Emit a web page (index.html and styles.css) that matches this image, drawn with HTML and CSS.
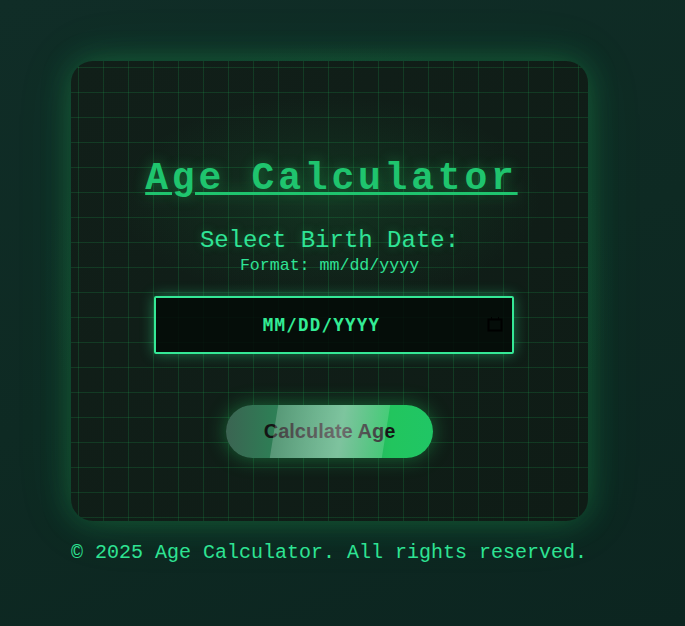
FILE: index.html
```html
<!DOCTYPE html>
<html lang="en">
<head>
<meta charset="utf-8">
<title>Age Calculator</title>
<link rel="stylesheet" href="styles.css">
</head>
<body>
<div class="wrap">
  <main class="card">
    <h1 class="title">Age Calculator</h1>
    <p class="label">Select Birth Date:</p>
    <p class="hint">Format: mm/dd/yyyy</p>
    <div class="date-field">
      <span class="date-text">MM/DD/YYYY</span>
      <svg class="cal" width="16" height="17" viewBox="0 0 16 17" aria-hidden="true">
        <rect x="1.5" y="3.5" width="13" height="11" fill="none" stroke="#000" stroke-width="2"/>
        <line x1="4.5" y1="1" x2="4.5" y2="3" stroke="#000" stroke-width="1"/>
        <line x1="11.5" y1="1" x2="11.5" y2="3" stroke="#000" stroke-width="1"/>
      </svg>
    </div>
    <button class="btn" type="button"><span class="btn-text">Calculate Age</span></button>
  </main>
  <footer class="foot">© 2025 Age Calculator. All rights reserved.</footer>
</div>
</body>
</html>
```
FILE: styles.css
```css
html, body {
  margin: 0;
  padding: 0;
}
body {
  min-height: 626px;
  background:
    radial-gradient(ellipse 60% 55% at 48% 45%, rgba(20, 90, 60, 0.35), transparent 70%),
    linear-gradient(160deg, #102d27 0%, #0e2a23 50%, #0c2520 100%);
  font-family: "Courier New", Courier, "Nimbus Mono PS", "Nimbus Mono L", FreeMono, "Liberation Mono", monospace;
}
.wrap {
  width: 517px;
  padding: 61px 0 0 71px;
}
.card {
  height: 460px;
  box-sizing: border-box;
  border-radius: 22px;
  padding-top: 97px;
  display: flex;
  flex-direction: column;
  align-items: center;
  background-color: #101e18;
  background-image:
    radial-gradient(ellipse 55% 30% at 50% 30%, rgba(34, 197, 94, 0.13), transparent 75%),
    linear-gradient(rgba(34, 197, 94, 0.17) 1px, transparent 1px),
    linear-gradient(90deg, rgba(34, 197, 94, 0.17) 1px, transparent 1px),
    linear-gradient(135deg, #111f19, #0f1c16);
  background-size: auto, 25px 25px, 25px 25px, auto;
  background-position: 0 0, 7px 6px, 7px 6px, 0 0;
  box-shadow: 0 0 30px rgba(34, 197, 94, 0.3), 0 0 60px rgba(34, 197, 94, 0.1);
}
.title {
  margin: 0;
  font-size: 38px;
  line-height: 41px;
  font-weight: bold;
  letter-spacing: 3.8px;
  color: #1fc46e;
  text-decoration: underline;
  text-decoration-thickness: 3px;
  text-underline-offset: 3px;
  text-shadow: 0 0 14px rgba(34, 197, 94, 0.45);
  padding-left: 3.8px;
}
.label {
  margin: 28px 0 0;
  font-size: 24px;
  line-height: 28px;
  color: #2fe395;
  text-shadow: 0 0 8px rgba(34, 197, 94, 0.35);
}
.hint {
  margin: 0;
  font-size: 16.6px;
  line-height: 22px;
  color: #2fe395;
}
.date-field {
  margin: 19px 0 0 9px;
  width: 360px;
  height: 58px;
  box-sizing: border-box;
  border: 2px solid #35e896;
  border-radius: 2px;
  background: rgba(3, 10, 7, 0.85);
  box-shadow: 0 0 14px rgba(46, 232, 143, 0.45);
  display: flex;
  align-items: center;
  padding: 0 9px 0 4px;
}
.date-text {
  flex: 1;
  text-align: center;
  font-family: "DejaVu Sans Mono", monospace;
  font-weight: bold;
  font-size: 17.5px;
  letter-spacing: 1.2px;
  color: #33ec95;
  padding-right: 4px;
}
.cal {
  display: block;
  margin-top: -2px;
}
.btn {
  margin-top: 51px;
  position: relative;
  overflow: hidden;
  width: 207px;
  height: 53px;
  border: 0;
  border-radius: 27px;
  background: linear-gradient(90deg, #3b6452 0%, #2e7d55 22%, #2f9e63 55%, #22c55e 80%, #20c665 100%);
  box-shadow: 0 0 20px rgba(34, 197, 94, 0.45);
  font-family: "Liberation Sans", Arial, sans-serif;
  font-weight: bold;
  font-size: 20px;
  color: #141414;
  padding: 0;
  cursor: pointer;
}
.btn-text {
  position: relative;
  z-index: 1;
}
.btn::after {
  content: "";
  position: absolute;
  top: 0;
  bottom: 0;
  left: 48px;
  width: 112px;
  transform: skewX(-9deg);
  background: linear-gradient(90deg, rgba(255, 255, 255, 0.2), rgba(255, 255, 255, 0.38) 60%, rgba(255, 255, 255, 0.16));
  z-index: 2;
}
.foot {
  margin-top: 21px;
  font-size: 20px;
  line-height: 22px;
  color: #2ee393;
  white-space: nowrap;
}
```
